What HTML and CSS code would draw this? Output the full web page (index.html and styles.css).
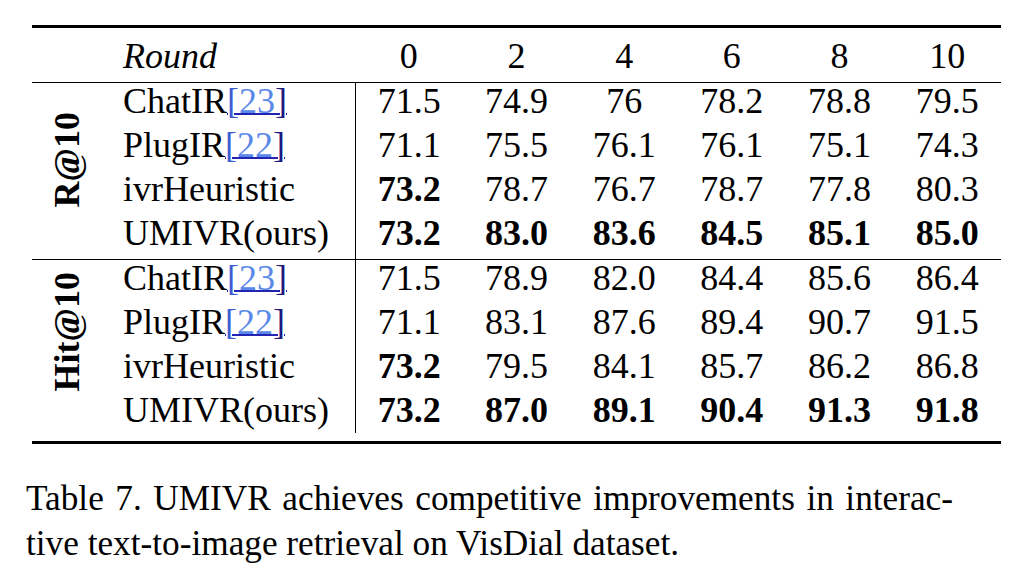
FILE: index.html
```html
<!DOCTYPE html>
<html>
<head>
<meta charset="utf-8">
<link rel="stylesheet" href="styles.css">
</head>
<body>
<div class="fig">
  <div class="tbl-wrap">
    <table class="tbl">
      <colgroup>
        <col class="c-grp"><col class="c-meth">
        <col class="c-num"><col class="c-num"><col class="c-num"><col class="c-num"><col class="c-num"><col class="c-num">
      </colgroup>
      <thead>
        <tr>
          <th></th><th class="meth"><em>Round</em></th>
          <th class="num">0</th><th class="num">2</th><th class="num">4</th><th class="num">6</th><th class="num">8</th><th class="num">10</th>
        </tr>
      </thead>
      <tbody class="grp">
        <tr>
          <td class="lbl" rowspan="4"><span class="rot rot-r">R@10</span></td>
          <td class="meth">ChatIR<a class="ref"><span class="br1">[</span>23<span class="br2">]</span></a></td>
          <td class="num first">71.5</td><td class="num">74.9</td><td class="num">76</td><td class="num">78.2</td><td class="num">78.8</td><td class="num">79.5</td>
        </tr>
        <tr>
          <td class="meth">PlugIR<a class="ref"><span class="br1">[</span>22<span class="br2">]</span></a></td>
          <td class="num first">71.1</td><td class="num">75.5</td><td class="num">76.1</td><td class="num">76.1</td><td class="num">75.1</td><td class="num">74.3</td>
        </tr>
        <tr>
          <td class="meth">ivrHeuristic</td>
          <td class="num first b">73.2</td><td class="num">78.7</td><td class="num">76.7</td><td class="num">78.7</td><td class="num">77.8</td><td class="num">80.3</td>
        </tr>
        <tr>
          <td class="meth">UMIVR(ours)</td>
          <td class="num first b">73.2</td><td class="num b">83.0</td><td class="num b">83.6</td><td class="num b">84.5</td><td class="num b">85.1</td><td class="num b">85.0</td>
        </tr>
      </tbody>
      <tbody class="grp grp2">
        <tr>
          <td class="lbl" rowspan="4"><span class="rot rot-h">Hit@10</span></td>
          <td class="meth">ChatIR<a class="ref"><span class="br1">[</span>23<span class="br2">]</span></a></td>
          <td class="num first">71.5</td><td class="num">78.9</td><td class="num">82.0</td><td class="num">84.4</td><td class="num">85.6</td><td class="num">86.4</td>
        </tr>
        <tr>
          <td class="meth">PlugIR<a class="ref"><span class="br1">[</span>22<span class="br2">]</span></a></td>
          <td class="num first">71.1</td><td class="num">83.1</td><td class="num">87.6</td><td class="num">89.4</td><td class="num">90.7</td><td class="num">91.5</td>
        </tr>
        <tr>
          <td class="meth">ivrHeuristic</td>
          <td class="num first b">73.2</td><td class="num">79.5</td><td class="num">84.1</td><td class="num">85.7</td><td class="num">86.2</td><td class="num">86.8</td>
        </tr>
        <tr class="last">
          <td class="meth">UMIVR(ours)</td>
          <td class="num first b">73.2</td><td class="num b">87.0</td><td class="num b">89.1</td><td class="num b">90.4</td><td class="num b">91.3</td><td class="num b">91.8</td>
        </tr>
      </tbody>
    </table>
  </div>
  <div class="caption">
    <div class="l1">Table 7. UMIVR achieves competitive improvements in interac-</div>
    <div class="l2">tive text-to-image retrieval on VisDial dataset.</div>
  </div>
</div>
</body>
</html>
```
FILE: styles.css
```css
html, body {
  margin: 0;
  padding: 0;
  background: #fff;
  color: #000;
  font-family: "Liberation Serif", "Times New Roman", serif;
}

.tbl-wrap {
  margin: 25px 0 0 32px;
  width: 969px;
  border-top: 3px solid #000;
  border-bottom: 3px solid #000;
  padding-bottom: 8px;
}

.tbl {
  border-collapse: separate;
  border-spacing: 0;
  table-layout: fixed;
  width: 100%;
  font-size: 36px;
}

.c-grp { width: 91px; }
.c-meth { width: 232px; }

.tbl th,
.tbl td {
  padding: 0 0 8px 0;
  line-height: 36px;
  font-weight: normal;
  vertical-align: top;
  white-space: nowrap;
}

.tbl thead th {
  padding: 10px 0 8px 0;
  border-bottom: 1px solid #000;
}

.meth { text-align: left; }
.num { text-align: center; }
.first { border-left: 1px solid #000; }
.b { font-weight: bold !important; }

.grp2 tr:first-child td { border-top: 1px solid #000; }
.tbl tr.last td { padding-bottom: 5px; }

.ref {
  color: #5a88e8;
  text-decoration: underline;
  text-decoration-color: #2424b4;
  text-decoration-thickness: 2px;
  text-underline-offset: 0px;
}
.br1 { color: #3c5cd4; }
.br2 { color: #1a1a80; }

.lbl {
  line-height: 0;
  padding: 0;
}
.rot {
  display: inline-block;
  vertical-align: top;
  writing-mode: vertical-rl;
  transform: rotate(180deg);
  font-weight: bold;
  line-height: 36px;
  margin-left: 17px;
}
.rot-r { margin-top: 29px; }
.rot-h { margin-top: 12px; }

.caption {
  margin: 32px 0 0 26px;
  width: 927px;
  font-size: 35.25px;
  line-height: 45px;
}
.l1 {
  text-align: justify;
  text-align-last: justify;
}
```
